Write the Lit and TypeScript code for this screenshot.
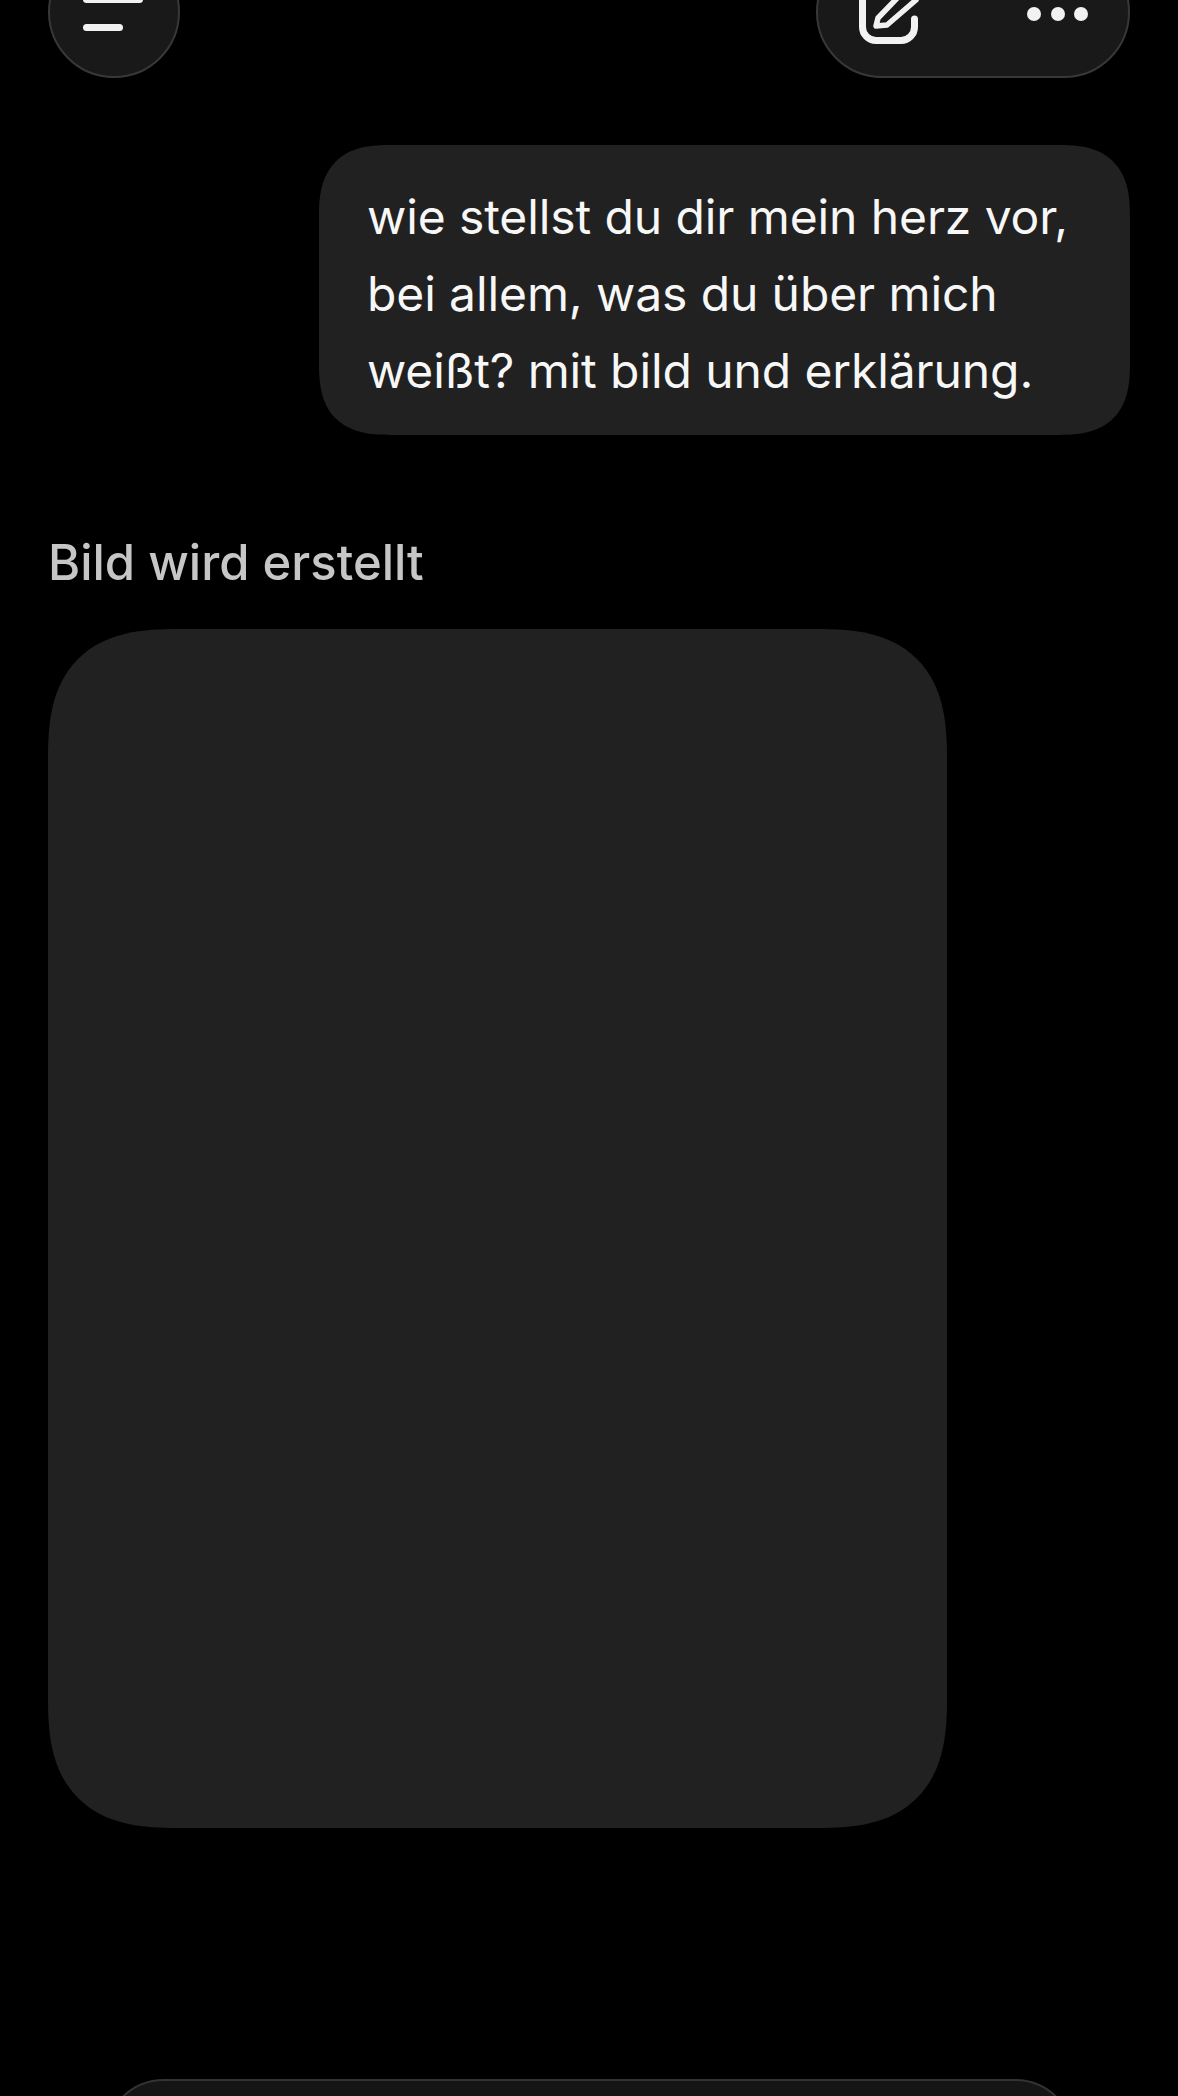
import { LitElement, html, css } from "lit";
import { customElement } from "lit/decorators.js";

@customElement("app-root")
export class AppRoot extends LitElement {
  static styles = css`
    :host {
      display: block;
      height: 2096px;
      overflow: hidden;
      background: #000;
      font-family: Inter, "Liberation Sans", sans-serif;
    }
    .page {
      display: flex;
      flex-direction: column;
      padding: 0 48px;
    }
    .header {
      display: flex;
      justify-content: space-between;
      margin-top: -54px;
    }
    .menu {
      box-sizing: border-box;
      width: 132px;
      height: 132px;
      border-radius: 50%;
      background: #191919;
      border: 2px solid #383838;
      display: flex;
      flex-direction: column;
      justify-content: center;
      gap: 21px;
      padding: 3px 0 0 33px;
    }
    .bar {
      height: 7px;
      border-radius: 4px;
      background: #f2f2f2;
    }
    .bar.long { width: 60px; }
    .bar.short { width: 40px; }
    .pill {
      box-sizing: border-box;
      width: 314px;
      height: 132px;
      border-radius: 66px;
      background: #191919;
      border: 2px solid #383838;
      display: flex;
      align-items: center;
      justify-content: space-between;
      padding: 2px 40px 0;
    }
    .pen { display: block; width: 62px; height: 60px; overflow: visible; }
    .dots { display: flex; gap: 9.5px; padding-top: 2px; }
    .dot {
      width: 14px;
      height: 14px;
      border-radius: 50%;
      background: #f2f2f2;
    }
    .bubble {
      align-self: flex-end;
      box-sizing: border-box;
      width: 811px;
      height: 290px;
      margin-top: 67px;
      padding: 33px 30px 0 48px;
      border-radius: 72px;
      corner-shape: superellipse(1.4);
      background: #212121;
      color: #f7f7f7;
      font-size: 48px;
      line-height: 77px;
      letter-spacing: -0.1px;
    }
    .label {
      margin-top: 100px;
      height: 56px;
      font-size: 49px;
      line-height: 56px;
      font-weight: 500;
      color: #c6c6c6;
      white-space: nowrap;
    }
    .card {
      width: 899px;
      height: 1199px;
      margin-top: 38px;
      border-radius: 130px;
      corner-shape: superellipse(1.4);
      background: #212121;
    }
    .composer {
      box-sizing: border-box;
      align-self: center;
      width: 971px;
      height: 120px;
      margin-top: 251px;
      border-radius: 60px;
      background: #151515;
      border: 2px solid #333;
    }
  `;

  render() {
    return html`
      <div class="page">
        <div class="header">
          <div class="menu">
            <div class="bar long"></div>
            <div class="bar short"></div>
          </div>
          <div class="pill">
            <svg class="pen" viewBox="0 0 62 60" fill="none" stroke="#f2f2f2" stroke-width="7" stroke-linecap="round" stroke-linejoin="round">
              <path d="M24 3.500H18A13.500 13.500 0 0 0 4.500 17V44A13.500 13.500 0 0 0 18 57.500H43A13.500 13.500 0 0 0 56.500 44V36" />
              <path stroke-width="5.500" d="M18 43L20 35L46 8L58 17L29 42Z" />
            </svg>
            <div class="dots">
              <div class="dot"></div>
              <div class="dot"></div>
              <div class="dot"></div>
            </div>
          </div>
        </div>
        <div class="bubble">wie stellst du dir mein herz vor,<br />bei allem, was du über mich<br />weißt? mit bild und erklärung.</div>
        <div class="label">Bild wird erstellt</div>
        <div class="card"></div>
        <div class="composer"></div>
      </div>
    `;
  }
}
